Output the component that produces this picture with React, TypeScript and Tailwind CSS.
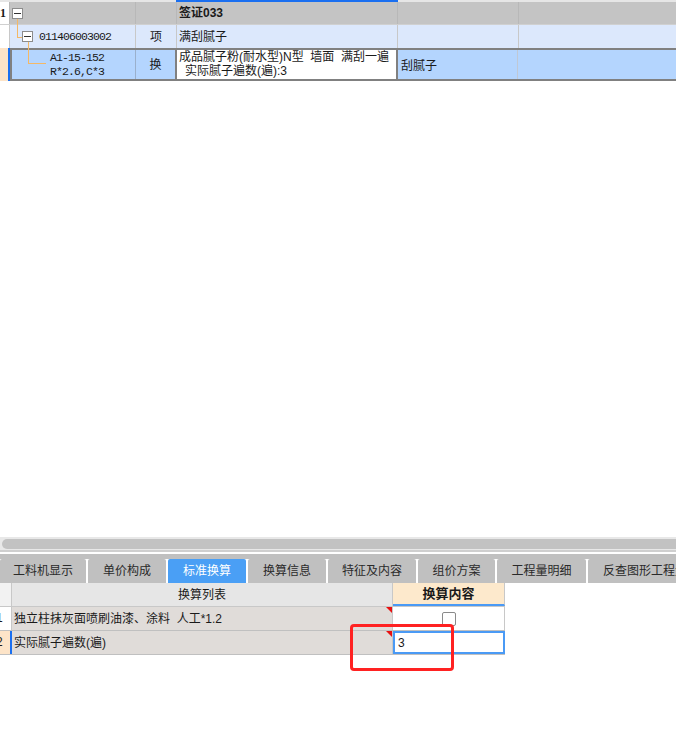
import React from 'react';

const tabs = [
  { label: '工料机显示', w: 'w-[86px]' },
  { label: '单价构成', w: 'w-[78px]' },
  { label: '标准换算', w: 'w-[78px]', active: true },
  { label: '换算信息', w: 'w-[78px]' },
  { label: '特征及内容', w: 'w-[88px]' },
  { label: '组价方案', w: 'w-[77px]' },
  { label: '工程量明细', w: 'w-[89px]' },
  { label: '反查图形工程量', w: 'w-[114px]' },
];

const MinusBox = () => (
  <span className="relative z-20 w-[11px] h-[11px] border border-[#8c8c8c] bg-white flex items-center justify-center shrink-0">
    <span className="w-[7px] h-px bg-[#333]" />
  </span>
);

const RedMark = () => (
  <span className="absolute right-0 top-0 w-0 h-0 border-t-[6px] border-t-[#e81010] border-l-[6px] border-l-transparent" />
);

const App: React.FC = () => {
  return (
    <div className="relative w-[676px] h-[739px] bg-white overflow-hidden text-[12px] text-[#1a1a1a] font-['Liberation_Sans','Noto_Sans_CJK_SC',sans-serif]">
      {/* top grid */}
      <div className="relative">
        {/* header remnant */}
        <div className="flex h-[2px] bg-[#e6e6e6]">
          <div className="w-[176px]" />
          <div className="w-[222px] bg-[#1a6ff0]" />
        </div>

        {/* row 1 */}
        <div className="flex h-[23px] bg-[#c4c4c4] border-b border-[#d0d0d0]">
          <div className="w-[10px] border-r border-[#b8b8b8] bg-white font-bold text-[12px] leading-[22px] font-['Liberation_Serif',serif]">1</div>
          <div className="w-[126px] border-r border-[#b8b8b8] flex items-start pl-[2px] pt-[6px]">
            <MinusBox />
          </div>
          <div className="w-[41px] border-r border-[#b8b8b8]" />
          <div className="w-[221px] border-r border-[#b8b8b8] flex items-center pl-[2px] font-bold">签证033</div>
          <div className="w-[121px] border-r border-[#b8b8b8]" />
          <div className="flex-1" />
        </div>

        {/* row 2 */}
        <div className="flex h-[23px] bg-[#dce8fc]">
          <div className="w-[10px] border-r border-[#c8c8c8] bg-white" />
          <div className="w-[126px] border-r border-[#c8c8c8] flex items-start pl-[12px] pt-[6px] gap-[6px]">
            <MinusBox />
            <span className="font-['Liberation_Mono',monospace] text-[11.5px] tracking-[-0.9px] leading-[11px]">011406003002</span>
          </div>
          <div className="w-[41px] border-r border-[#c8c8c8] flex items-center justify-center">项</div>
          <div className="w-[221px] border-r border-[#c8c8c8] flex items-center pl-[2px]">满刮腻子</div>
          <div className="w-[121px] border-r border-[#c8c8c8]" />
          <div className="flex-1" />
        </div>

        {/* row 3 */}
        <div className="flex h-[33px]">
          <div className="w-[8px] bg-[#fde4c8]" />
          <div className="w-[2px] bg-[#1a6ff0]" />
          <div className="flex flex-1 border-y-2 border-l-2 border-[#808080] bg-[#b4d5fe]">
            <div className="w-[124px] border-r border-[#9ab0cc] pl-[38px] font-['Liberation_Mono',monospace] text-[11.5px] tracking-[-0.9px] leading-[14px] pt-[1px]">
              <div>A1-15-152</div>
              <div>R*2.6,C*3</div>
            </div>
            <div className="w-[41px] border-r-2 border-[#808080] flex items-center justify-center">换</div>
            <div className="w-[221px] border-r-2 border-[#808080] bg-white pl-[2px] leading-[14px] overflow-hidden whitespace-nowrap">
              <div>成品腻子粉(耐水型)N型&nbsp; 墙面&nbsp; 满刮一遍</div>
              <div className="pl-[6px]">实际腻子遍数(遍):3</div>
            </div>
            <div className="w-[120px] border-r border-[#c0c8d4] flex items-center pl-[3px] pt-[2px]">刮腻子</div>
            <div className="flex-1" />
          </div>
        </div>

        {/* tree connectors */}
        <span className="absolute z-10 left-[17px] top-[19px] w-px h-[18px] bg-[#f4b866]" />
        <span className="absolute z-10 left-[17px] top-[37px] w-[6px] h-px bg-[#f4b866]" />
        <span className="absolute z-10 left-[28px] top-[42px] w-px h-[21px] bg-[#f4b866]" />
        <span className="absolute z-10 left-[28px] top-[63px] w-[18px] h-px bg-[#f4b866]" />
      </div>

      {/* empty area */}
      <div className="h-[456px]" />

      {/* horizontal scrollbar */}
      <div className="h-[13px] bg-[#e8e8e8] pt-[2px] pl-[2px]">
        <div className="h-[10px] rounded-l-full bg-[#c2c2c2]" />
      </div>
      <div className="h-[2px] bg-[#cfcfcf]" />
      <div className="h-[2px] bg-white" />

      {/* tabs */}
      <div className="h-[29px] bg-[#c0c0c0] pt-[5px] overflow-hidden">
        <div className="flex h-[24px] gap-[2px] bg-white">
          {tabs.map((t) => (
            <div
              key={t.label}
              className={`${t.w} shrink-0 flex items-center justify-center whitespace-nowrap rounded-t-[2px] text-[12px] ${
                t.active ? 'bg-[#4a9ff5] text-white' : 'bg-[#c0c0c0] text-[#2a2a2a]'
              }`}
            >
              {t.label}
            </div>
          ))}
        </div>
      </div>

      {/* bottom grid */}
      <div className="flex">
        <div className="w-[505px]">
          <div className="flex h-[24px] border-b border-[#c8c8c8]">
            <div className="w-[12px] bg-[#f2f2f2] border-r border-[#c8c8c8]" />
            <div className="w-[381px] bg-[#e6e6e6] border-r border-[#c8c8c8] flex items-center justify-center">换算列表</div>
            <div className="w-[112px] bg-[#fde9cc] border-r border-[#c8c8c8] border-b-2 border-b-[#4a9af5] flex items-center justify-center font-bold text-[13px]">换算内容</div>
          </div>
          <div className="flex h-[24px] border-b border-[#c0c0c0]">
            <div className="w-[12px] bg-white border-r border-[#c8c8c8] overflow-hidden leading-[23px]">
              <span className="ml-[-4px]">1</span>
            </div>
            <div className="relative w-[381px] bg-[#e0dcd9] border-r border-[#c8c8c8] flex items-center pl-[2px]">
              独立柱抹灰面喷刷油漆、涂料&nbsp; 人工*1.2
              <RedMark />
            </div>
            <div className="w-[112px] bg-white border-r border-[#c8c8c8] flex justify-center pt-[5px]">
              <span className="w-[14px] h-[14px] border border-[#8a8a8a] rounded-[2px] bg-white" />
            </div>
          </div>
          <div className="flex h-[24px] border-b border-[#c0c0c0]">
            <div className="w-[10px] bg-[#fde4c8] overflow-hidden leading-[23px]">
              <span className="ml-[-4px]">2</span>
            </div>
            <div className="w-[2px] bg-[#1a6ff0]" />
            <div className="relative w-[381px] bg-[#e0dcd9] border-r border-[#c8c8c8] flex items-center pl-[2px]">
              实际腻子遍数(遍)
              <RedMark />
            </div>
            <div className="w-[112px] bg-white border-2 border-[#4a9af5] flex items-center pl-[3px]">3</div>
          </div>
        </div>
      </div>

      {/* annotation */}
      <div className="absolute left-[350px] top-[624px] w-[104px] h-[47px] border-[3px] border-[#ff2222] rounded-[4px]" />
    </div>
  );
};

export default App;
